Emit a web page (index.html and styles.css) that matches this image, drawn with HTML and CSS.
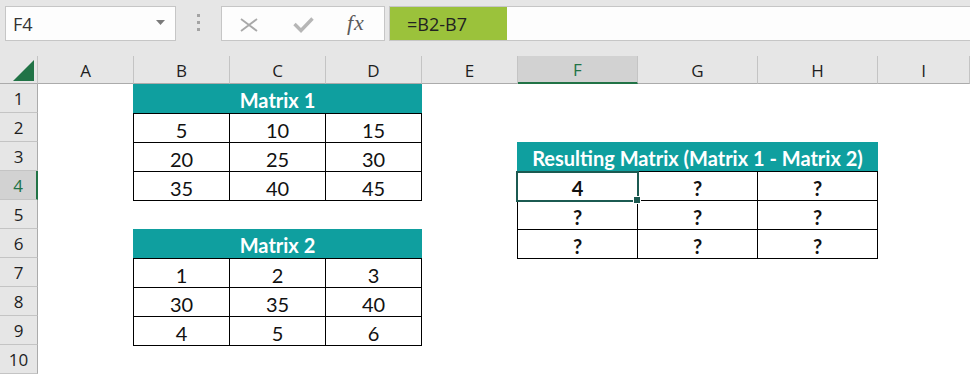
FILE: index.html
```html
<!DOCTYPE html>
<html>
<head>
<meta charset="utf-8">
<link rel="stylesheet" href="styles.css">
</head>
<body>
<div class="toolbar">
  <div class="namebox">
    <span class="nb-text">F4</span>
    <svg class="nb-arrow" width="9" height="5" viewBox="0 0 9 5"><path d="M0 0H9L4.5 5Z" fill="#7a7a7a"/></svg>
  </div>
  <div class="grip"><i></i><i></i><i></i></div>
  <div class="fxbox">
    <svg class="ico-x" width="18" height="14" viewBox="0 0 18 14"><path d="M1 1L17 13M17 1L1 13" stroke="#a9a9a9" stroke-width="1.8" fill="none"/></svg>
    <svg class="ico-check" width="21" height="16" viewBox="0 0 21 16"><path d="M1.5 7L8 13.5L19.5 1.5" stroke="#b6b6b6" stroke-width="3.4" fill="none"/></svg>
    <span class="fx">fx</span>
  </div>
  <div class="formula"><span class="formula-hl">=B2-B7</span></div>
</div>

<div class="sheet">
  <div class="corner"><svg class="corner-tri" width="37" height="28" viewBox="0 0 37 28"><path d="M13 25H34V4Z" fill="#217346"/></svg></div>
  <div class="colhead">A</div>
  <div class="colhead">B</div>
  <div class="colhead">C</div>
  <div class="colhead">D</div>
  <div class="colhead">E</div>
  <div class="colhead sel">F</div>
  <div class="colhead">G</div>
  <div class="colhead">H</div>
  <div class="colhead">I</div>

  <div class="rowhead">1</div>
  <div class="rowhead">2</div>
  <div class="rowhead">3</div>
  <div class="rowhead sel">4</div>
  <div class="rowhead">5</div>
  <div class="rowhead">6</div>
  <div class="rowhead">7</div>
  <div class="rowhead">8</div>
  <div class="rowhead">9</div>
  <div class="rowhead">10</div>

  <div class="thead m1-head">Matrix 1</div>
  <div class="tbody m1-body">
    <div class="c">5</div><div class="c">10</div><div class="c">15</div>
    <div class="c">20</div><div class="c">25</div><div class="c">30</div>
    <div class="c">35</div><div class="c">40</div><div class="c">45</div>
  </div>

  <div class="thead m2-head">Matrix 2</div>
  <div class="tbody m2-body">
    <div class="c">1</div><div class="c">2</div><div class="c">3</div>
    <div class="c">30</div><div class="c">35</div><div class="c">40</div>
    <div class="c">4</div><div class="c">5</div><div class="c">6</div>
  </div>

  <div class="thead r-head">Resulting Matrix (Matrix 1 - Matrix 2)</div>
  <div class="tbody r-body">
    <div class="c b active">4</div><div class="c b">?</div><div class="c b">?</div>
    <div class="c b">?</div><div class="c b">?</div><div class="c b">?</div>
    <div class="c b">?</div><div class="c b">?</div><div class="c b">?</div>
  </div>
</div>
</body>
</html>
```

FILE: styles.css
```css
* { box-sizing: border-box; margin: 0; padding: 0; }
html, body { width: 970px; height: 374px; overflow: hidden; }
body { background: #e6e6e6; font-family: "Open Sans", "Noto Sans", sans-serif; }

/* ---------- toolbar ---------- */
.toolbar { height: 56px; display: flex; align-items: flex-start; padding-top: 6px; }
.namebox {
  margin-left: 5px; width: 171px; height: 35px;
  border: 1px solid #c6c6c6; background: #fdfdfd;
  display: flex; align-items: center; justify-content: space-between;
  padding: 0 10px 0 7px;
}
.nb-text { font-size: 18px; color: #333; line-height: 1; }
.nb-arrow { margin-top: -3px; }
.grip {
  width: 45px; height: 35px; display: flex; flex-direction: column;
  align-items: center; justify-content: center; gap: 4px; padding-bottom: 3px;
}
.grip i { display: block; width: 3px; height: 3px; background: #a3a3a3; }
.fxbox {
  width: 164px; height: 35px; border: 1px solid #c6c6c6; background: #fdfdfd;
  display: flex; align-items: center; padding-left: 18px;
}
.ico-x { margin-top: 2px; }
.ico-check { margin-left: 35px; margin-top: 3px; }
.fx {
  margin-left: 33px; font-family: "Liberation Serif", serif; font-style: italic;
  font-size: 22px; color: #5a5a5a; letter-spacing: 1px; line-height: 1; margin-top: -2px;
}
.formula {
  flex: 1; height: 35px; margin-left: 4px; margin-right: -2px;
  border: 1px solid #c6c6c6; background: #fdfdfd; display: flex;
}
.formula-hl {
  width: 117px; background: #9bc23b; padding-left: 17px;
  display: flex; align-items: center; font-size: 18px; color: #222; line-height: 1;
}

/* ---------- sheet ---------- */
.sheet {
  display: grid;
  grid-template-columns: 38px repeat(5, 96px) repeat(3, 120px) 1fr;
  grid-template-rows: 28px repeat(10, 29px);
  background: #fff;
}
.corner { background: #e6e6e6; border-right: 1px solid #c4c4c4; border-bottom: 1px solid #ababab; }
.corner-tri { display: block; }
.colhead {
  background: #e6e6e6; border-right: 1px solid #c4c4c4; border-bottom: 1px solid #ababab;
  display: flex; align-items: center; justify-content: center;
  font-size: 17px; color: #1e1e1e; padding-top: 1px;
}
.colhead.sel { background: #d2d2d2; color: #217346; border-bottom: 2px solid #217346; }
.rowhead {
  grid-column: 1; background: #e6e6e6;
  border-right: 1px solid #ababab; border-bottom: 1px solid #c4c4c4;
  display: flex; align-items: center; justify-content: center;
  font-size: 17px; color: #1e1e1e;
}
.rowhead.sel { background: #d2d2d2; color: #217346; border-right: 2px solid #217346; }

.thead {
  background: #0f9f9f; color: #fff; font-family: Lato, "Open Sans", sans-serif;
  font-weight: 700; font-size: 20px; margin-left: -1px;
  display: flex; align-items: center; justify-content: center; padding-top: 2px;
}
.tbody {
  display: grid; grid-template-columns: repeat(3, 1fr);
  gap: 1px; padding: 1px; background: #000;
  margin-left: -1px; margin-bottom: -1px;
}
.c {
  background: #fff; display: flex; align-items: center; justify-content: center;
  font-family: Lato, "Open Sans", sans-serif; font-size: 20px; color: #111; padding-top: 4px;
}
.c.b { font-weight: 700; }
.c.active { position: relative; }
.c.active::before {
  content: ""; position: absolute; left: -2px; right: -2px; top: -1px; bottom: -2px;
  border: 2px solid #1b5a51;
}
.c.active::after {
  content: ""; position: absolute; right: -4px; bottom: -4px; width: 6px; height: 6px;
  background: #1b5a51; border: 1px solid #fff;
}

.m1-head { grid-column: 3 / 6; grid-row: 2; }
.m1-body { grid-column: 3 / 6; grid-row: 3 / 6; }
.m2-head { grid-column: 3 / 6; grid-row: 7; }
.m2-body { grid-column: 3 / 6; grid-row: 8 / 11; }
.r-head  { grid-column: 7 / 10; grid-row: 4; }
.r-body  { grid-column: 7 / 10; grid-row: 5 / 8; }
```
